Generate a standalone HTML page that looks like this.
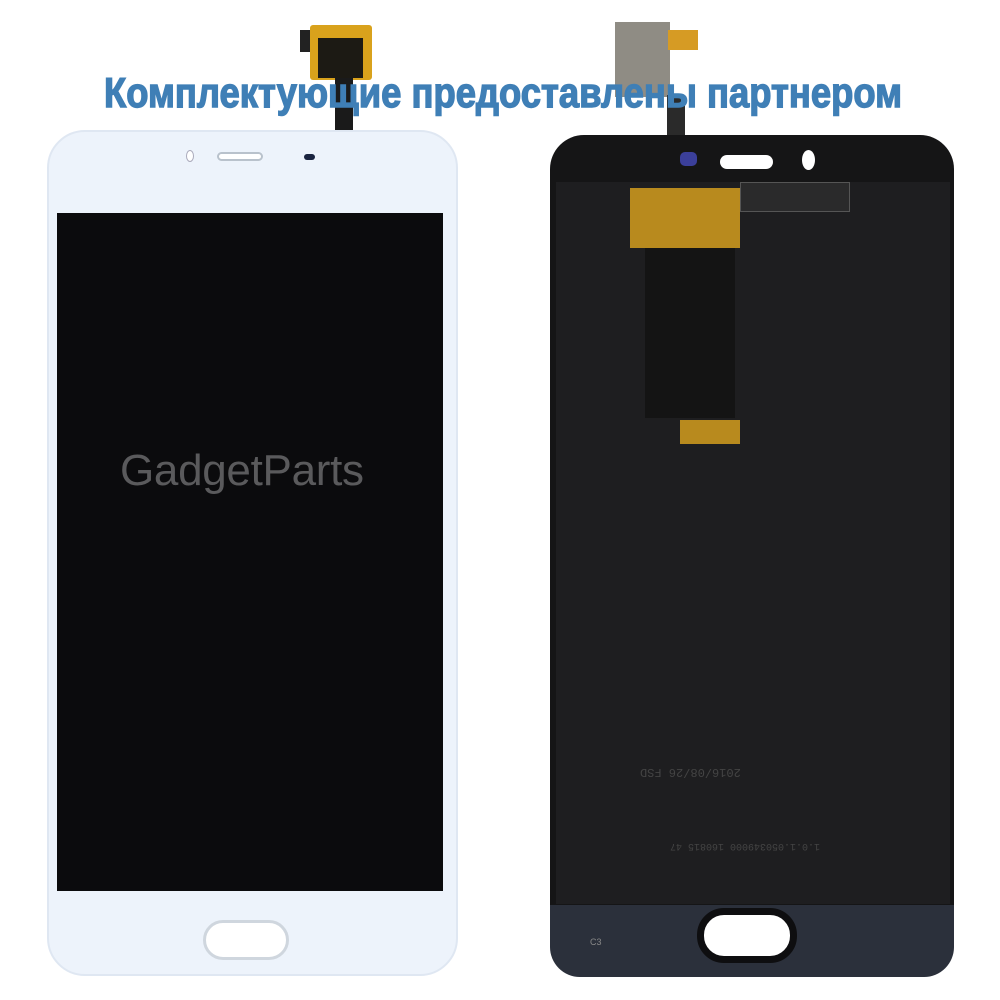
<!DOCTYPE html>
<html><head><meta charset="utf-8"><style>
html,body{margin:0;padding:0;background:#fff;width:1000px;height:1000px;overflow:hidden;position:relative}
div{position:absolute;box-sizing:border-box}
</style></head><body>
<!-- left flex -->
<div style="left:300px;top:30px;width:12px;height:22px;background:#222"></div>
<div style="left:310px;top:25px;width:62px;height:55px;background:#d9a21c;border-radius:3px"></div>
<div style="left:318px;top:38px;width:45px;height:40px;background:#1c1a14"></div>
<div style="left:335px;top:78px;width:18px;height:55px;background:#1a1a1a"></div>
<!-- right flex -->
<div style="left:615px;top:22px;width:55px;height:75px;background:#8f8c84"></div>
<div style="left:668px;top:30px;width:30px;height:20px;background:#d69b24"></div>
<div style="left:667px;top:95px;width:18px;height:90px;background:#2a2a2a"></div>

<!-- left phone -->
<div style="left:47px;top:130px;width:411px;height:846px;background:#edf3fb;border-radius:38px;border:2px solid #dfe7f2"></div>
<div style="left:57px;top:213px;width:386px;height:678px;background:#0b0b0d"></div>
<div style="left:186px;top:150px;width:8px;height:12px;border-radius:50%;background:#fff;border:1px solid #aab"></div>
<div style="left:217px;top:152px;width:46px;height:9px;border-radius:5px;background:#fff;border:2px solid #b9c2cc"></div>
<div style="left:304px;top:154px;width:11px;height:6px;border-radius:3px;background:#1a2440"></div>
<div style="left:203px;top:920px;width:86px;height:40px;border-radius:20px;background:#fff;border:3px solid #cfd6de"></div>
<div style="left:120px;top:446px;font:44px 'Liberation Sans',sans-serif;color:#5a5a5c;letter-spacing:-0.3px">GadgetParts</div>

<!-- right phone -->
<div style="left:550px;top:135px;width:404px;height:842px;background:#151516;border-radius:34px"></div>
<div style="left:550px;top:905px;width:404px;height:72px;background:#2b303b;border-radius:0 0 30px 30px"></div>
<div style="left:556px;top:182px;width:394px;height:722px;background:#1e1e20"></div>
<div style="left:720px;top:155px;width:53px;height:14px;border-radius:7px;background:#fff"></div>
<div style="left:802px;top:150px;width:13px;height:20px;border-radius:50%;background:#fff"></div>
<div style="left:680px;top:152px;width:17px;height:14px;border-radius:5px;background:#3b3f9a"></div>
<div style="left:630px;top:188px;width:110px;height:60px;background:#b88a1e"></div>
<div style="left:740px;top:182px;width:110px;height:30px;background:#2a2a2b;border:1px solid #555"></div>
<div style="left:645px;top:248px;width:90px;height:170px;background:#141414"></div>
<div style="left:680px;top:420px;width:60px;height:24px;background:#b88a1e"></div>
<div style="left:697px;top:908px;width:100px;height:55px;border-radius:27px;background:#fff;border:7px solid #0e0e10"></div>
<div style="left:640px;top:765px;font:12px 'Liberation Mono',monospace;color:#444;transform:rotate(180deg)">2016/08/26 FSD</div>
<div style="left:670px;top:840px;font:10px 'Liberation Mono',monospace;color:#444;transform:rotate(180deg)">1.0.1.050349000 160815 47</div>
<div style="left:590px;top:937px;font:9px 'Liberation Sans',sans-serif;color:#888">C3</div>

<!-- title -->
<svg style="position:absolute;left:0;top:0" width="1000" height="130">
<text x="104" y="107" textLength="798" lengthAdjust="spacingAndGlyphs" font-family="Liberation Sans, sans-serif" font-weight="bold" font-size="42" fill="#3f7fb6" stroke="#3f7fb6" stroke-width="1.4">Комплектующие предоставлены партнером</text>
</svg>
</body></html>
